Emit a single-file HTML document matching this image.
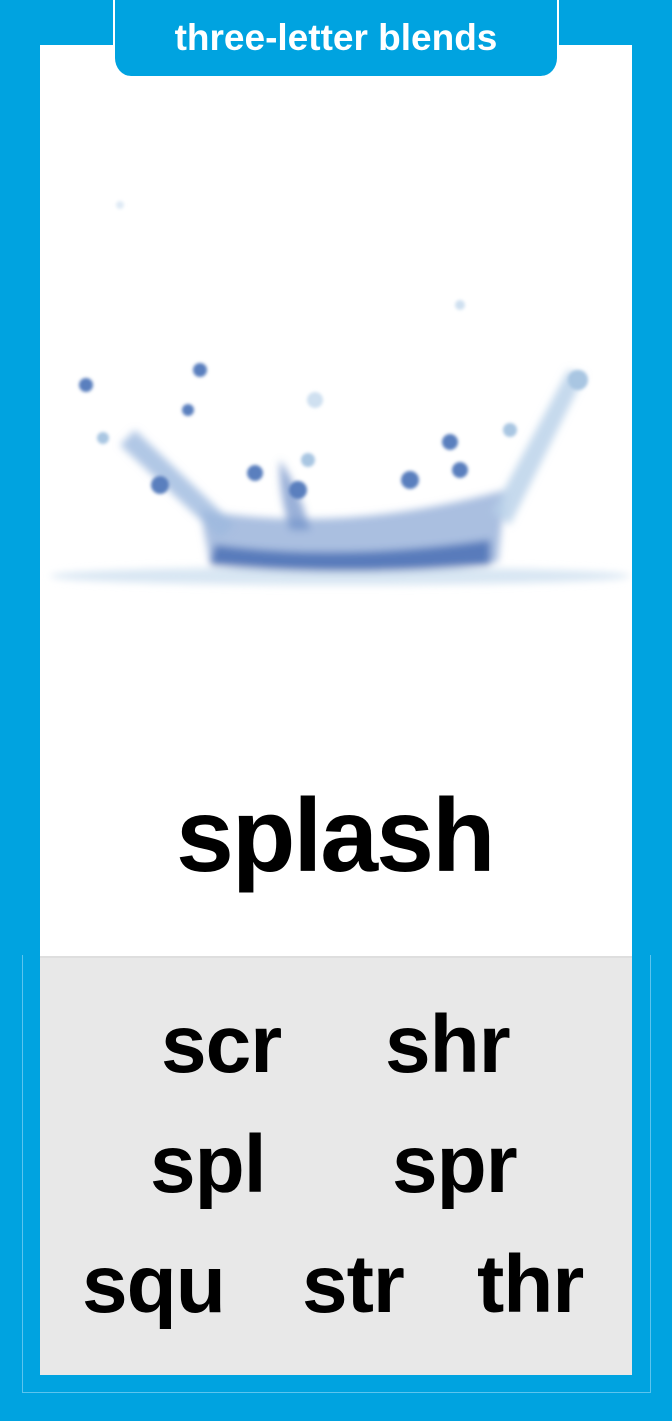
<!DOCTYPE html>
<html><head><meta charset="utf-8"><style>
*{margin:0;padding:0;box-sizing:border-box}
body{width:672px;height:1421px;background:#00a3e0;position:relative;overflow:hidden;font-family:"Liberation Sans",sans-serif;font-weight:bold}
.card{position:absolute;left:40px;top:45px;width:592px;height:911px;background:#fff}
.gray{position:absolute;left:40px;top:956px;width:592px;height:419px;background:#e8e8e8;border-top:2px solid #dedede}
.line{position:absolute;background:#5cc4ee}
.tab{position:absolute;left:113px;top:-10px;width:446px;height:86px;background:#00a3e0;border-radius:0 0 18px 18px;border-left:2px solid #fff;border-right:2px solid #fff}
.tab span{position:absolute;left:0;right:0;top:27px;text-align:center;color:#fff;font-size:37px;letter-spacing:0px}
.t{position:absolute;color:#000;white-space:nowrap;line-height:1}
</style></head><body>
<div class="card"></div>
<div class="gray"></div>
<div class="line" style="left:22px;top:955px;width:1px;height:437px"></div>
<div class="line" style="left:650px;top:955px;width:1px;height:437px"></div>
<div class="line" style="left:22px;top:1392px;width:629px;height:1px"></div>
<div class="tab"><span>three-letter blends</span></div>
<svg style="position:absolute;left:40px;top:190px" width="592" height="420" viewBox="0 0 592 420">
<defs><filter id="b"><feGaussianBlur stdDeviation="4"/></filter><filter id="b2"><feGaussianBlur stdDeviation="1.5"/></filter></defs>
<g filter="url(#b)">
<ellipse cx="300" cy="386" rx="290" ry="9" fill="#d8e6f3"/>
<path d="M160 320 Q300 345 465 300 L458 372 Q300 386 170 372 Z" fill="#8daad6" opacity="0.75"/>
<path d="M175 355 Q300 372 450 350 L450 375 Q300 388 170 375Z" fill="#4a70b5" opacity="0.85"/>
<path d="M95 240 L195 335 L180 348 L80 255Z" fill="#9db9de" opacity="0.8"/>
<path d="M545 185 L470 335 L452 322 L528 180Z" fill="#b7cfe8" opacity="0.8"/>
<path d="M240 270 Q260 300 270 340 L250 340 Q238 300 240 270Z" fill="#6e8fc8" opacity="0.7"/>
</g>
<g filter="url(#b2)" fill="#5a7fbe">
<circle cx="46" cy="195" r="7"/><circle cx="160" cy="180" r="7"/><circle cx="148" cy="220" r="6"/>
<circle cx="120" cy="295" r="9"/><circle cx="215" cy="283" r="8"/><circle cx="258" cy="300" r="9"/>
<circle cx="410" cy="252" r="8"/><circle cx="420" cy="280" r="8"/><circle cx="370" cy="290" r="9"/>
<circle cx="470" cy="240" r="7" fill="#a9c6e2"/><circle cx="538" cy="190" r="10" fill="#a9c6e2"/>
<circle cx="63" cy="248" r="6" fill="#a9c6e2"/><circle cx="268" cy="270" r="7" fill="#a9c6e2"/>
<circle cx="275" cy="210" r="8" fill="#cfe0f0"/><circle cx="420" cy="115" r="5" fill="#cfe0f0"/>
<circle cx="80" cy="15" r="4" fill="#dfeaf5"/>
</g>
</svg>
<div class="t" style="left:176px;top:784px;font-size:104px;letter-spacing:-2px">splash</div>
<div class="t" style="left:161px;top:1004px;font-size:82px;letter-spacing:-1px">scr</div>
<div class="t" style="left:385px;top:1004px;font-size:82px;letter-spacing:-1px">shr</div>
<div class="t" style="left:150px;top:1124px;font-size:82px;letter-spacing:-1px">spl</div>
<div class="t" style="left:392px;top:1124px;font-size:82px;letter-spacing:-1px">spr</div>
<div class="t" style="left:82px;top:1244px;font-size:82px;letter-spacing:-1px">squ</div>
<div class="t" style="left:302px;top:1244px;font-size:82px;letter-spacing:-1px">str</div>
<div class="t" style="left:477px;top:1244px;font-size:82px;letter-spacing:-1px">thr</div>
</body></html>
